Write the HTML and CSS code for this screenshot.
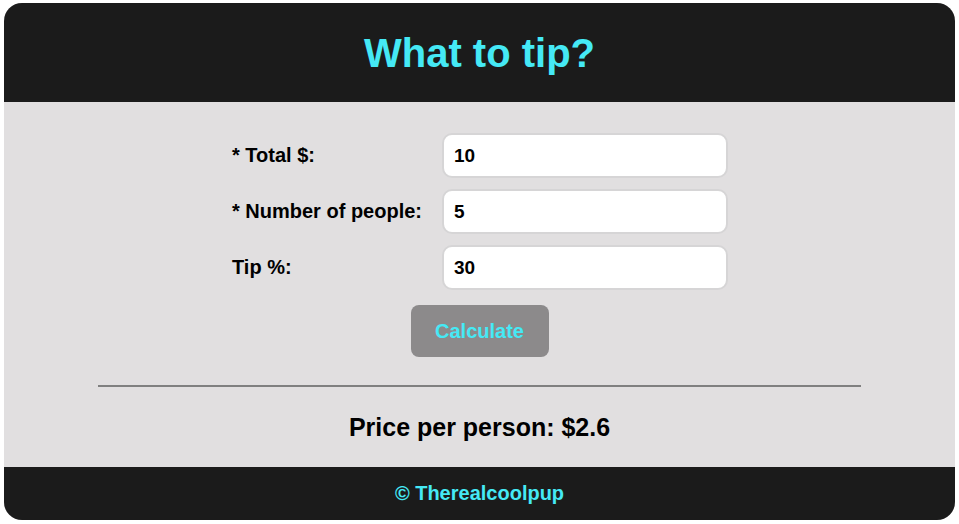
FILE: index.html
```html
<!DOCTYPE html>
<html>
<head>
<meta charset="utf-8">
<link rel="stylesheet" href="styles.css">
</head>
<body>
<div class="app">
  <header class="header"><h1 class="title">What to tip?</h1></header>
  <main class="main">
    <div class="form">
      <label class="label">* Total $:</label>
      <div class="input">10</div>
      <label class="label">* Number of people:</label>
      <div class="input">5</div>
      <label class="label">Tip %:</label>
      <div class="input">30</div>
    </div>
    <button class="btn">Calculate</button>
    <div class="rule"></div>
    <div class="result">Price per person: $2.6</div>
  </main>
  <footer class="footer">© Therealcoolpup</footer>
</div>
</body>
</html>
```
FILE: styles.css
```css
* { box-sizing: border-box; }
html, body { margin: 0; background: #ffffff; }
body {
  padding: 3px 4px 4px 4px;
  font-family: "Liberation Sans", Arial, sans-serif;
}
.app {
  width: 951px;
  height: 517px;
  border-radius: 18px;
  overflow: hidden;
  display: flex;
  flex-direction: column;
  background: #e1dfe0;
}
.header {
  height: 99px;
  background: #1b1b1b;
  display: flex;
  align-items: center;
  justify-content: center;
}
.title {
  margin: 0;
  color: #45e9f5;
  font-size: 40px;
  font-weight: bold;
  line-height: 1;
  padding-top: 1px;
}
.main {
  flex: 1;
  display: flex;
  flex-direction: column;
  align-items: center;
  padding-top: 31px;
}
.form {
  display: grid;
  grid-template-columns: 210px 286px;
  row-gap: 11px;
  align-items: center;
  margin-left: 1px;
}
.label {
  font-size: 20px;
  font-weight: bold;
  color: #000;
}
.input {
  height: 45px;
  background: #fff;
  border: 2px solid #d6d5d6;
  border-radius: 10px;
  padding: 0 10px;
  display: flex;
  align-items: center;
  font-size: 19px;
  font-weight: bold;
  color: #000;
}
.btn {
  margin-top: 15px;
  width: 138px;
  height: 52px;
  border: none;
  border-radius: 8px;
  background: #8c8a8b;
  color: #45e9f5;
  font-family: "Liberation Sans", Arial, sans-serif;
  font-size: 20px;
  font-weight: bold;
  padding: 0;
}
.rule {
  margin-top: 28px;
  width: 763px;
  height: 2px;
  background: #808080;
}
.result {
  flex: 1;
  display: flex;
  align-items: center;
  justify-content: center;
  font-size: 25px;
  font-weight: bold;
  color: #000;
}
.footer {
  height: 53px;
  background: #1b1b1b;
  color: #45e9f5;
  font-size: 20px;
  font-weight: bold;
  display: flex;
  align-items: center;
  justify-content: center;
}
```
